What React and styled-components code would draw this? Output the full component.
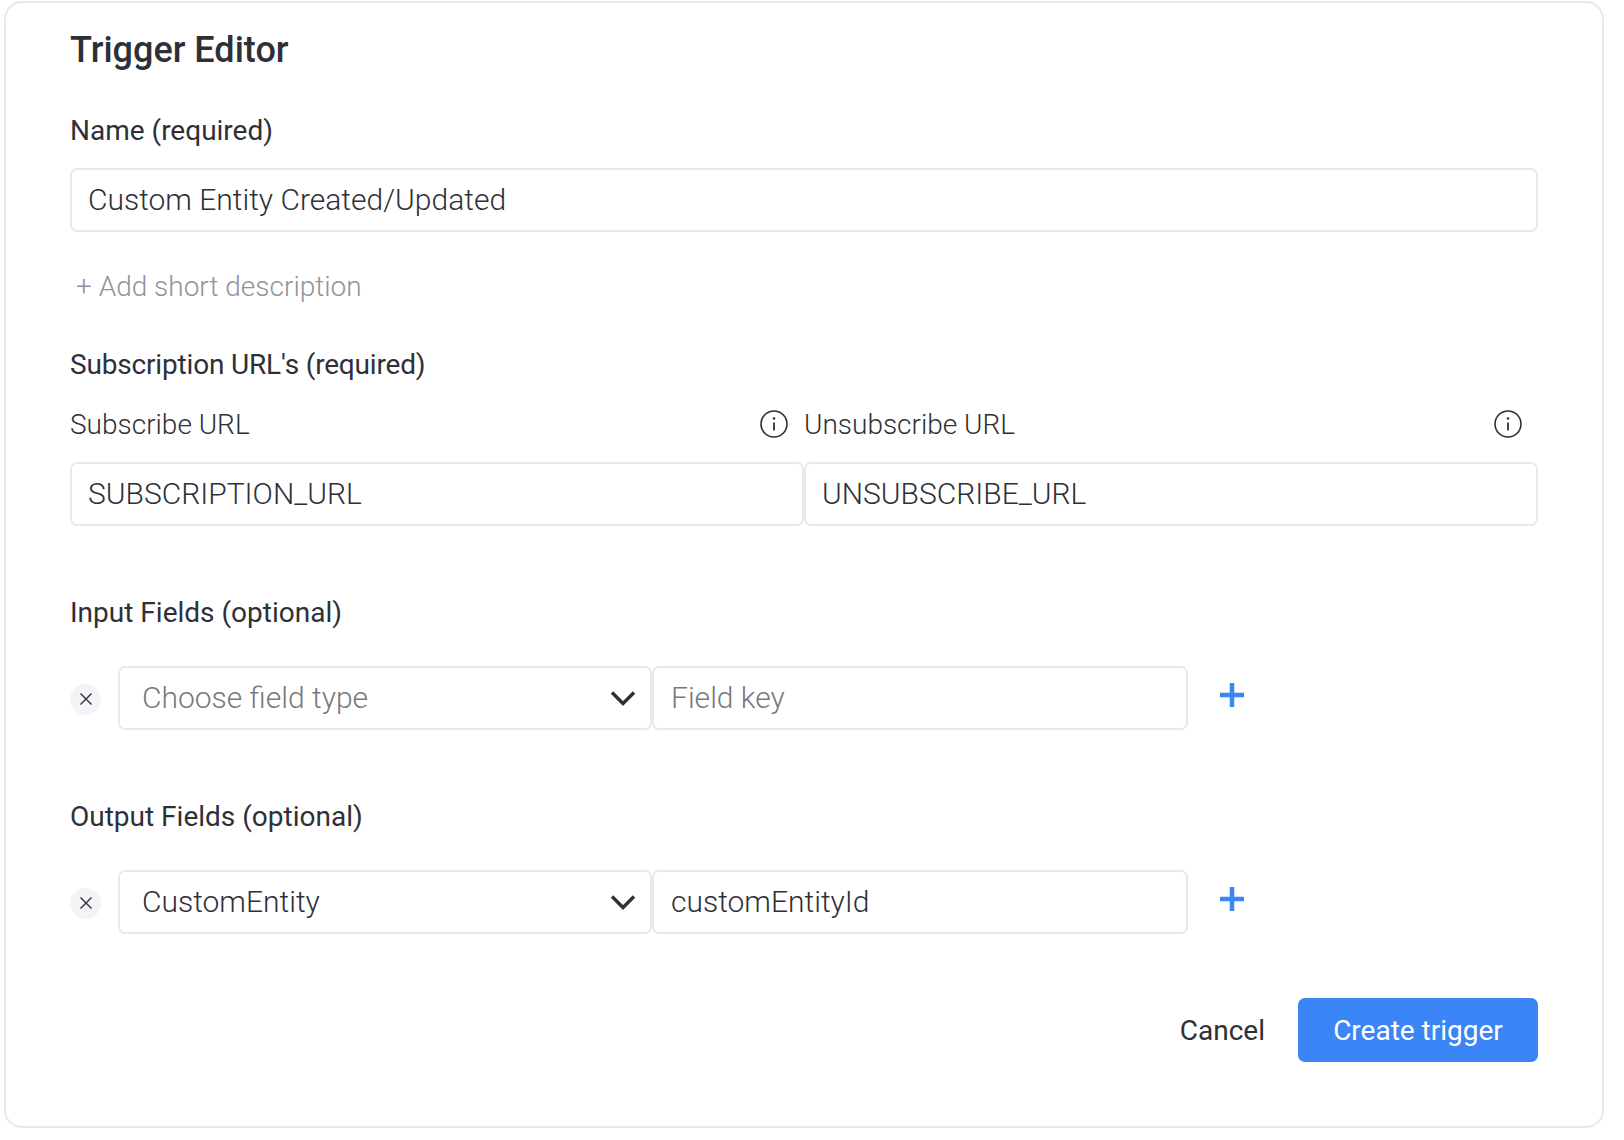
import React from "react";
import styled, { createGlobalStyle } from "styled-components";

const GlobalStyle = createGlobalStyle`
  * { box-sizing: border-box; }
  body {
    margin: 0;
    background: #fff;
    font-family: Roboto, "Liberation Sans", sans-serif;
    color: #2e3038;
  }
`;

const Page = styled.div`
  width: 1624px;
  height: 1140px;
  padding: 1px 0 0 4px;
`;

const Card = styled.div`
  width: 1600px;
  height: 1127px;
  border: 2px solid #e8e9ef;
  border-radius: 18px;
  padding: 25px 64px 0 64px;
`;

const Title = styled.h1`
  margin: 0 0 41px;
  font-size: 36px;
  line-height: 44px;
  font-weight: 500;
`;

const Label = styled.div`
  margin-top: ${p => p.$top || 0}px;
  font-size: 28px;
  line-height: 36px;
  font-weight: 450;
  letter-spacing: ${p => p.$spacing || 0}px;
`;

const Field = styled.div`
  display: flex;
  align-items: center;
  height: 64px;
  min-width: 0;
  flex: ${p => p.$flex || "1 1 0"};
  padding: 0 16px 2px;
  border: 2px solid #e8e9ef;
  border-radius: 7px;
  font-size: 30px;
  font-weight: 300;
  color: ${p => (p.$placeholder ? "#77797f" : "#2e3038")};
  background: #fff;
`;

const NameField = styled(Field)`
  margin-top: 19px;
`;

const AddDescription = styled.div`
  margin: 35px 0 0 6px;
  font-size: 28px;
  font-weight: 300;
  line-height: 40px;
  color: #8f93a0;
`;

const UrlColumns = styled.div`
  display: grid;
  grid-template-columns: 734px 734px;
  margin-top: 23px;
`;

const UrlColumn = styled.div`
  display: flex;
  flex-direction: column;
  gap: 20px;
`;

const UrlHeader = styled.div`
  display: flex;
  align-items: center;
  justify-content: space-between;
  height: 36px;
  padding-right: 16px;
  font-size: 28px;
  font-weight: 300;
  color: #2e3038;
`;

const UrlField = styled(Field)`
  flex: none;
`;

const FieldRow = styled.div`
  display: flex;
  align-items: center;
  margin-top: 35px;
`;

const RemoveButton = styled.div`
  display: flex;
  align-items: center;
  justify-content: center;
  width: 31px;
  height: 31px;
  margin: 2px 17px 0 0;
  border-radius: 50%;
  background: #f3f4f7;
`;

const SelectField = styled(Field)`
  flex: none;
  width: 534px;
  padding: 0 14px 0 22px;
  justify-content: space-between;
`;

const SelectText = styled.span`
  margin-bottom: 2px;
`;

const KeyField = styled(Field)`
  flex: none;
  width: 536px;
  padding-left: 17px;
`;

const AddButton = styled.div`
  display: flex;
  margin: -6px 0 0 32px;
`;

const Actions = styled.div`
  display: flex;
  align-items: center;
  justify-content: flex-end;
  gap: 33px;
  margin-top: 64px;
`;

const CancelButton = styled.div`
  font-size: 28px;
  color: #2e3038;
`;

const PrimaryButton = styled.div`
  display: flex;
  align-items: center;
  justify-content: center;
  width: 240px;
  height: 64px;
  border-radius: 7px;
  background: #3b86f7;
  color: #fff;
  font-size: 28px;
`;

const InfoIcon = () => (
  <svg width="28" height="28" viewBox="0 0 28 28" fill="none" stroke="#2e3038">
    <circle cx="14" cy="14" r="13" strokeWidth="1.6" />
    <path d="M14 12.5v8" strokeWidth="1.8" />
    <circle cx="14" cy="8.5" r="1.3" fill="#2e3038" stroke="none" />
  </svg>
);

const CrossIcon = () => (
  <svg width="14" height="14" viewBox="0 0 14 14" fill="none" stroke="#2e3038" strokeWidth="1.4">
    <path d="M1.5 1.5l11 11M12.5 1.5l-11 11" />
  </svg>
);

const ChevronIcon = () => (
  <svg width="26" height="16" viewBox="0 0 26 16" fill="none" stroke="#2e3038" strokeWidth="3.4">
    <path d="M2 2.5l11 11 11-11" />
  </svg>
);

const PlusIcon = () => (
  <svg width="24" height="24" viewBox="0 0 24 24" fill="none" stroke="#3b86f7" strokeWidth="4.5">
    <path d="M12 0v24M0 12h24" />
  </svg>
);

const FieldEditor = ({ type, fieldKey, placeholder }) => (
  <FieldRow>
    <RemoveButton><CrossIcon /></RemoveButton>
    <SelectField $placeholder={placeholder}>
      <SelectText>{type}</SelectText>
      <ChevronIcon />
    </SelectField>
    <KeyField $placeholder={placeholder}>{fieldKey}</KeyField>
    <AddButton><PlusIcon /></AddButton>
  </FieldRow>
);

const App = () => (
  <Page>
    <GlobalStyle />
    <Card>
      <Title>Trigger Editor</Title>
      <Label>Name (required)</Label>
      <NameField $flex="none">Custom Entity Created/Updated</NameField>
      <AddDescription>+ Add short description</AddDescription>
      <Label $top={40} $spacing={-0.17}>Subscription URL's (required)</Label>
      <UrlColumns>
        <UrlColumn>
          <UrlHeader>Subscribe URL <InfoIcon /></UrlHeader>
          <UrlField>SUBSCRIPTION_URL</UrlField>
        </UrlColumn>
        <UrlColumn>
          <UrlHeader>Unsubscribe URL <InfoIcon /></UrlHeader>
          <UrlField>UNSUBSCRIBE_URL</UrlField>
        </UrlColumn>
      </UrlColumns>
      <Label $top={69}>Input Fields (optional)</Label>
      <FieldEditor type="Choose field type" fieldKey="Field key" placeholder />
      <Label $top={69}>Output Fields (optional)</Label>
      <FieldEditor type="CustomEntity" fieldKey="customEntityId" />
      <Actions>
        <CancelButton>Cancel</CancelButton>
        <PrimaryButton>Create trigger</PrimaryButton>
      </Actions>
    </Card>
  </Page>
);

export default App;
